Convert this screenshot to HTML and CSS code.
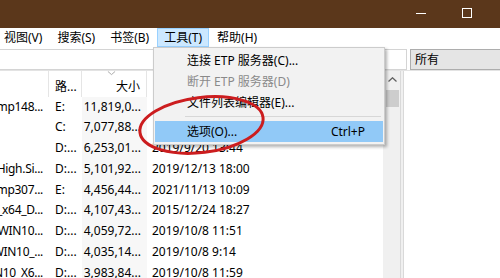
FILE: index.html
```html
<!doctype html>
<html lang="zh-CN">

<head>
  <meta charset="utf-8" />
  <title>Everything</title>
  <link rel="stylesheet" href="styles.css">
</head>

<body>
  <div class="window">
    <div class="titlebar">
      <div class="caption-btn"><span class="min-icon"></span></div>
      <div class="caption-btn"><span class="max-icon"></span></div>
      <div class="caption-close"></div>
    </div>

    <div class="menubar">
      <span class="menu-item">视图(V)</span>
      <span class="menu-item">搜索(S)</span>
      <span class="menu-item">书签(B)</span>
      <span class="menu-item active">工具(T)</span>
      <span class="menu-item">帮助(H)</span>
    </div>

    <div class="toolbar">
      <div class="search-box"></div>
      <div class="filter-box">所有</div>
    </div>

    <div class="main">
      <div class="list">
        <div class="list-head">
          <div class="col col-name"></div>
          <div class="col col-path">路...</div>
          <div class="col col-size">
            <svg class="sort-arrow" width="9" height="5" viewBox="0 0 9 5">
              <polyline points="0.5,0.5 4.5,4 8.5,0.5" fill="none" stroke="#a0a0a0" stroke-width="1" />
            </svg>
            <span>大小</span>
          </div>
          <div class="col col-date"></div>
        </div>

        <!-- first two dates sit under the open menu -->
        <div class="row">
          <div class="col col-name"><span>mp148...</span></div>
          <div class="col col-path">E:</div>
          <div class="col col-size">11,819,0...</div>
          <div class="col col-date"></div>
        </div>
        <div class="row">
          <div class="col col-name"></div>
          <div class="col col-path">C:</div>
          <div class="col col-size">7,077,88...</div>
          <div class="col col-date"></div>
        </div>
        <div class="row">
          <div class="col col-name"></div>
          <div class="col col-path">D:...</div>
          <div class="col col-size">6,253,01...</div>
          <div class="col col-date">2019/9/20 13:44</div>
        </div>
        <div class="row">
          <div class="col col-name"><span>d.High.Si...</span></div>
          <div class="col col-path">D:...</div>
          <div class="col col-size">5,101,92...</div>
          <div class="col col-date">2019/12/13 18:00</div>
        </div>
        <div class="row">
          <div class="col col-name"><span>mp307...</span></div>
          <div class="col col-path">E:</div>
          <div class="col col-size">4,456,44...</div>
          <div class="col col-date">2021/11/13 10:09</div>
        </div>
        <div class="row">
          <div class="col col-name"><span>7_x64_D...</span></div>
          <div class="col col-path">D:...</div>
          <div class="col col-size">4,107,43...</div>
          <div class="col col-date">2015/12/24 18:27</div>
        </div>
        <div class="row">
          <div class="col col-name"><span>_WIN10...</span></div>
          <div class="col col-path">D:...</div>
          <div class="col col-size">4,059,72...</div>
          <div class="col col-date">2019/10/8 11:51</div>
        </div>
        <div class="row">
          <div class="col col-name"><span>_WIN10_...</span></div>
          <div class="col col-path">D:...</div>
          <div class="col col-size">4,035,14...</div>
          <div class="col col-date">2019/10/8 9:14</div>
        </div>
        <div class="row">
          <div class="col col-name"><span>WIN10_X6...</span></div>
          <div class="col col-path">D:...</div>
          <div class="col col-size">3,983,84...</div>
          <div class="col col-date">2019/10/8 11:59</div>
        </div>
      </div>

      <div class="scrollbar">
        <div class="scroll-up">
          <svg width="9" height="5" viewBox="0 0 9 5">
            <polyline points="0.5,4.5 4.5,0.8 8.5,4.5" fill="none" stroke="#606060" stroke-width="1.3" />
          </svg>
        </div>
        <div class="scroll-thumb"></div>
      </div>
      <div class="splitter"></div>
      <div class="preview"></div>
    </div>

    <!-- Tools menu, opened -->
    <div class="dropdown">
      <div class="dd-item"><span>连接 ETP 服务器(C)...</span><span></span></div>
      <div class="dd-item disabled"><span>断开 ETP 服务器(D)</span><span></span></div>
      <div class="dd-item"><span>文件列表编辑器(E)...</span><span></span></div>
      <div class="dd-sep"></div>
      <div class="dd-item selected"><span>选项(O)...</span><span class="shortcut">Ctrl+P</span></div>
    </div>

    <!-- red marker circle drawn on the screenshot -->
    <svg class="mark" width="500" height="278" viewBox="0 0 500 278">
      <ellipse cx="201.5" cy="125" rx="62" ry="27.5" transform="rotate(-7 201.5 125)"
        fill="none" stroke="#cc1d1f" stroke-width="3" />
    </svg>
  </div>
</body>

</html>
```

FILE: styles.css
```css
html,
body {
  margin: 0;
  height: 100%;
}

body {
  font-family: "Noto Sans", "Noto Sans CJK SC", sans-serif;
  font-size: 12px;
  color: #000;
  background: #fff;
  overflow: hidden;
}

.window {
  position: relative;
  width: 500px;
  height: 278px;
  display: flex;
  flex-direction: column;
  overflow: hidden;
}

/* title bar */
.titlebar {
  height: 28px;
  flex: none;
  background-color: #5b371b;
  display: flex;
  justify-content: flex-end;
}

.caption-btn {
  width: 46px;
  height: 26px;
  display: flex;
  align-items: center;
  justify-content: center;
}

.caption-close {
  width: 10px;
}

.min-icon {
  width: 10px;
  height: 1px;
  background: #fff;
}

.max-icon {
  width: 8px;
  height: 8px;
  border: 1px solid #fff;
}

/* menu bar */
.menubar {
  height: 19px;
  flex: none;
  display: flex;
  gap: 1px;
  margin-left: -3px;
  background: #fff;
}

.menu-item {
  padding: 0 6px;
  line-height: 17px;
  border: 1px solid transparent;
  white-space: nowrap;
}

.menu-item.active {
  background-color: #cce8ff;
  border-color: #99d1ff;
}

/* search row */
.toolbar {
  height: 24px;
  flex: none;
  display: flex;
  align-items: flex-start;
  gap: 3px;
  padding-top: 2px;
  box-sizing: border-box;
  border-bottom: 1px solid #e3e3e3;
}

.search-box {
  margin-left: -1px;
  width: 406px;
  height: 19px;
  border: 1px solid #d4d4d4;
  background: #fff;
}

.filter-box {
  flex: 1;
  height: 19px;
  line-height: 19px;
  border: 1px solid #adadad;
  border-right: none;
  background: #e5e5e5;
  padding-left: 4px;
}

/* result area */
.main {
  flex: 1;
  display: flex;
  min-height: 0;
}

.list {
  width: 383px;
  flex: none;
  overflow: hidden;
}

.list-head {
  height: 25.5px;
  display: flex;
}

.list-head .col {
  border-right: 1px solid #e5e5e5;
  display: flex;
  flex-direction: column;
  justify-content: flex-end;
  padding-bottom: 2px;
  line-height: 16px;
}

.row {
  height: 20.75px;
  display: flex;
  line-height: 20.75px;
  white-space: nowrap;
}

.col {
  box-sizing: border-box;
  flex: none;
  overflow: hidden;
  white-space: nowrap;
}

.col-name {
  width: 49px;
  display: flex;
  justify-content: flex-end;
  padding-right: 6px;
  letter-spacing: -0.3px;
}

.col-path {
  width: 33px;
  padding-left: 6px;
}

.col-size {
  width: 65px;
  text-align: right;
  padding-right: 6px;
}

.row .col-size {
  background-color: #f7f7f7;
}

.list-head .col-size {
  align-items: flex-end;
}

.sort-arrow {
  align-self: center;
  margin-bottom: 3px;
}

.col-date {
  flex: 1;
  padding-left: 5px;
}

.list-head .col-date {
  border-right: none;
}

.scrollbar {
  width: 17px;
  flex: none;
  background: #f0f0f0;
  display: flex;
  flex-direction: column;
}

.scroll-up {
  height: 17px;
  display: flex;
  align-items: center;
  justify-content: center;
  padding-left: 2px;
}

.scroll-thumb {
  height: 17px;
  margin: 2px 1px 0 3px;
  background: #cdcdcd;
}

.splitter {
  width: 4px;
  flex: none;
  background: #f0f0f0;
  border-left: 1px solid #d9d9d9;
  border-right: 1px solid #d9d9d9;
  box-sizing: border-box;
}

.preview {
  flex: 1;
  background: #fff;
}

/* opened Tools menu */
.dropdown {
  position: absolute;
  left: 153px;
  top: 47px;
  width: 232px;
  box-sizing: border-box;
  padding: 2px 1px;
  background: #f2f2f2;
  border: 1px solid #cccccc;
  box-shadow: 2px 2px 3px rgba(0, 0, 0, 0.3);
}

.dd-item {
  height: 21px;
  line-height: 21px;
  display: flex;
  justify-content: space-between;
  padding: 0 18px 0 32px;
  white-space: nowrap;
}

.dd-item.disabled {
  color: #8a8a8a;
}

.dd-item.selected {
  background-color: #91c9f7;
}

.dd-sep {
  height: 1px;
  margin: 3px 2px 4px 30px;
  background: #d7d7d7;
}

.mark {
  position: absolute;
  left: 0;
  top: 0;
  pointer-events: none;
}
```
